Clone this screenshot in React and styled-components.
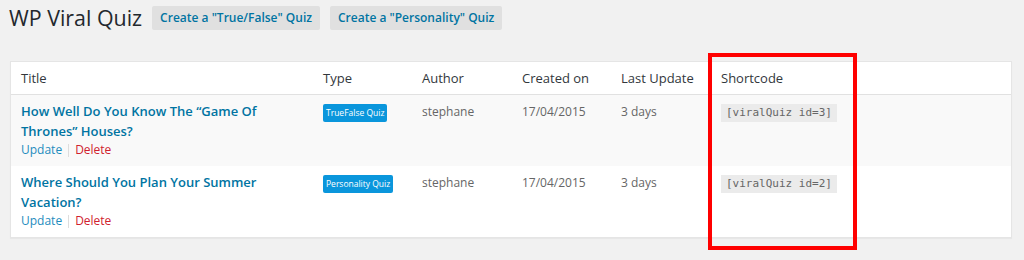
import React from 'react';
import styled, { createGlobalStyle } from 'styled-components';

const GlobalStyle = createGlobalStyle`
  html, body {
    margin: 0;
    padding: 0;
    background: #f1f1f1;
    font-family: "Open Sans", "Liberation Sans", sans-serif;
    color: #444;
  }
`;

const Page = styled.div`
  position: relative;
  width: 1024px;
  height: 260px;
  overflow: hidden;
`;

const Header = styled.div`
  display: flex;
  align-items: center;
  gap: 10px;
  padding: 3px 0 0 9px;
`;

const Heading = styled.h1`
  margin: 0;
  font-size: 21.4px;
  font-weight: 400;
  line-height: 29px;
  color: #23282d;
`;

const AddButton = styled.a`
  display: inline-flex;
  align-items: center;
  height: 24px;
  padding: 0 8px;
  background: #e0e0e0;
  border-radius: 2px;
  color: #0074a2;
  font-size: 12px;
  font-weight: 600;
  text-decoration: none;
  white-space: nowrap;
`;

const Table = styled.table`
  box-sizing: border-box;
  margin: 29px 0 0 10px;
  width: 1002px;
  border-spacing: 0;
  border-collapse: separate;
  table-layout: fixed;
  background: #fff;
  border: 1px solid #e5e5e5;
  box-shadow: 0 1px 1px rgba(0, 0, 0, 0.04);
`;

const Th = styled.th`
  box-sizing: border-box;
  width: ${(p) => p.w}px;
  padding: 8px 10px;
  text-align: left;
  font-size: 13px;
  font-weight: 400;
  line-height: 16px;
  color: #32373c;
  border-bottom: 1px solid #e1e1e1;
`;

const Row = styled.tr`
  background: ${(p) => (p.alt ? '#f9f9f9' : '#fff')};
`;

const Td = styled.td`
  padding: 7px 10px;
  vertical-align: top;
  font-size: 12px;
  line-height: 19.6px;
  color: #666;
`;

const QuizTitle = styled.a`
  display: block;
  padding-right: 20px;
  font-size: 13px;
  font-weight: 600;
  line-height: 19.6px;
  color: #0074a2;
  text-decoration: none;
`;

const Actions = styled.div`
  display: flex;
  align-items: center;
  font-size: 12px;
  line-height: 18px;
`;

const Action = styled.a`
  color: ${(p) => (p.danger ? '#d0212e' : '#1e8cbe')};
  text-decoration: none;
`;

const Sep = styled.span`
  width: 1px;
  height: 13px;
  margin: 0 6px;
  background: #ddd;
`;

const Badge = styled.span`
  display: inline-block;
  margin-top: 1px;
  padding: 0 3px;
  height: 18px;
  line-height: 18px;
  border-radius: 2px;
  background: #0a96dc;
  color: #fff;
  font-size: 8.5px;
  white-space: nowrap;
`;

const Code = styled.code`
  display: inline-block;
  margin-top: 1px;
  padding: 0 5px;
  height: 18px;
  line-height: 18px;
  background: #ebebeb;
  color: #666;
  font-family: "DejaVu Sans Mono", "Liberation Mono", monospace;
  font-size: 11px;
`;

const Highlight = styled.div`
  position: absolute;
  left: 708px;
  top: 53px;
  width: 149px;
  height: 197px;
  box-sizing: border-box;
  border: 4px solid #ff0000;
  pointer-events: none;
`;

const columns = [
  ['Title', 302],
  ['Type', 99],
  ['Author', 100],
  ['Created on', 99],
  ['Last Update', 100],
  ['Shortcode', 300],
];

const quizzes = [
  {
    id: 3,
    title: 'How Well Do You Know The “Game Of Thrones” Houses?',
    type: 'TrueFalse Quiz',
  },
  {
    id: 2,
    title: 'Where Should You Plan Your Summer Vacation?',
    type: 'Personality Quiz',
  },
];

const App = () => (
  <Page>
    <GlobalStyle />
    <Header>
      <Heading>WP Viral Quiz</Heading>
      <AddButton href="#">Create a "True/False" Quiz</AddButton>
      <AddButton href="#">Create a "Personality" Quiz</AddButton>
    </Header>
    <Table>
      <thead>
        <tr>
          {columns.map(([label, w]) => (
            <Th key={label} w={w}>{label}</Th>
          ))}
        </tr>
      </thead>
      <tbody>
        {quizzes.map((q, i) => (
          <Row key={q.id} alt={i % 2 === 0}>
            <Td>
              <QuizTitle href="#">{q.title}</QuizTitle>
              <Actions>
                <Action href="#">Update</Action>
                <Sep />
                <Action href="#" danger>Delete</Action>
              </Actions>
            </Td>
            <Td><Badge>{q.type}</Badge></Td>
            <Td>stephane</Td>
            <Td>17/04/2015</Td>
            <Td>3 days</Td>
            <Td><Code>[viralQuiz id={q.id}]</Code></Td>
          </Row>
        ))}
      </tbody>
    </Table>
    <Highlight />
  </Page>
);

export default App;
